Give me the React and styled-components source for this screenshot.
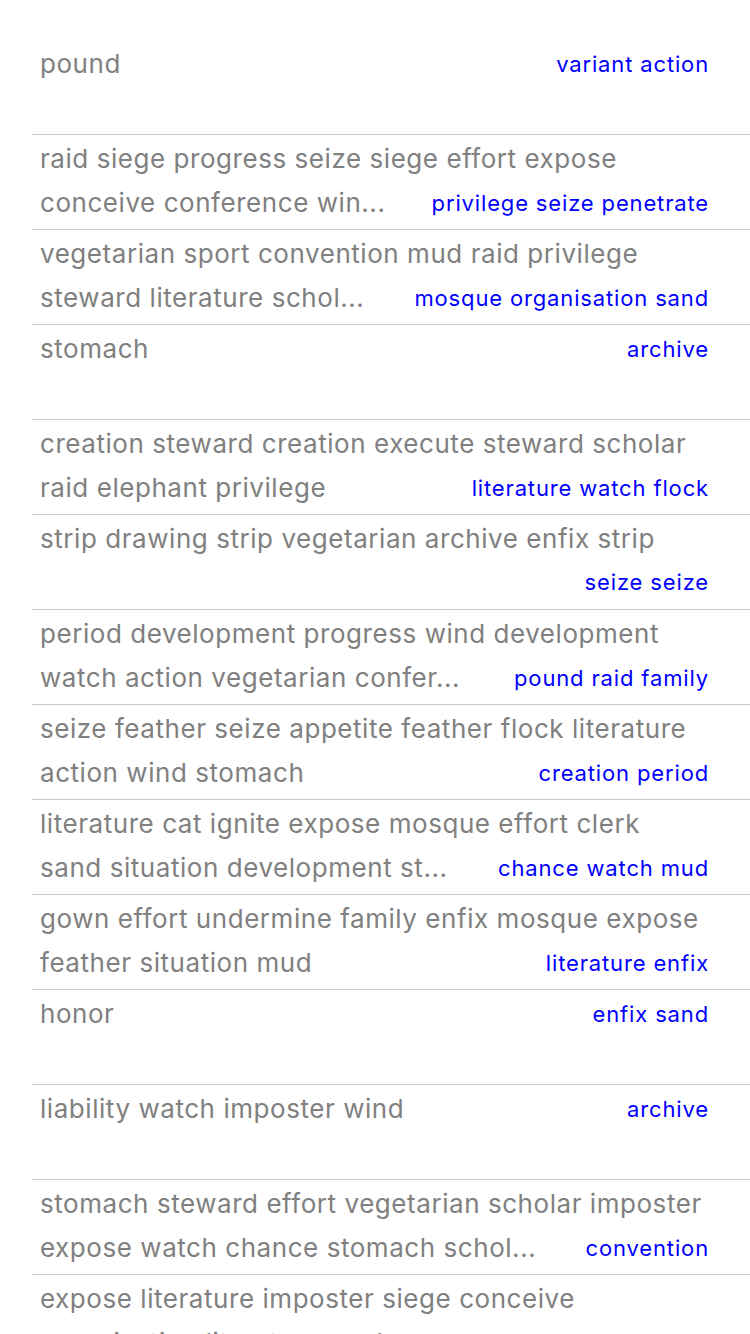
import React from 'react';
import styled, { createGlobalStyle } from 'styled-components';

const GlobalStyle = createGlobalStyle`
  html, body {
    margin: 0;
    padding: 0;
    background: #fff;
  }
  body {
    font-family: Inter, "Noto Sans", "Liberation Sans", sans-serif;
    -webkit-font-smoothing: antialiased;
  }
`;

const List = styled.div`
  padding-top: 40px;
  background: #fff;
  height: 1334px;
  overflow: hidden;
  box-sizing: border-box;
`;

const Row = styled.div`
  margin-left: 32px;
  height: 95px;
  box-sizing: border-box;
  padding: 2px 41px 5px 8px;
  border-bottom: 1px solid #c8c7cc;
  display: flex;
  flex-direction: column;
`;

const Line = styled.div`
  height: 44px;
  display: flex;
  align-items: baseline;
  justify-content: space-between;
  line-height: 44px;
  white-space: nowrap;
`;

const Title = styled.span`
  font-size: 26px;
  color: #808080;
  letter-spacing: 0.55px;
  overflow: hidden;
  text-overflow: ellipsis;
  min-width: 0;
`;

const Detail = styled.span`
  font-size: 22px;
  color: #0000ff;
  letter-spacing: 0.85px;
  flex-shrink: 0;
  margin-left: 40px;
  position: relative;
  top: -1px;
`;

const rows = [
  { lines: ['pound'], detail: 'variant action' },
  { lines: ['raid siege progress seize siege effort expose', 'conceive conference win...'], detail: 'privilege seize penetrate' },
  { lines: ['vegetarian sport convention mud raid privilege', 'steward literature schol...'], detail: 'mosque organisation sand' },
  { lines: ['stomach'], detail: 'archive' },
  { lines: ['creation steward creation execute steward scholar', 'raid elephant privilege'], detail: 'literature watch flock' },
  { lines: ['strip drawing strip vegetarian archive enfix strip', ''], detail: 'seize seize' },
  { lines: ['period development progress wind development', 'watch action vegetarian confer...'], detail: 'pound raid family' },
  { lines: ['seize feather seize appetite feather flock literature', 'action wind stomach'], detail: 'creation period' },
  { lines: ['literature cat ignite expose mosque effort clerk', 'sand situation development st...'], detail: 'chance watch mud' },
  { lines: ['gown effort undermine family enfix mosque expose', 'feather situation mud'], detail: 'literature enfix' },
  { lines: ['honor'], detail: 'enfix sand' },
  { lines: ['liability watch imposter wind'], detail: 'archive' },
  { lines: ['stomach steward effort vegetarian scholar imposter', 'expose watch chance stomach schol...'], detail: 'convention' },
  { lines: ['expose literature imposter siege conceive', 'organisation literature mud...'], detail: 'imposter wind' },
];

const ListRow = ({ lines, detail }) => {
  const last = lines.length - 1;
  return (
    <Row>
      {lines.map((text, i) => (
        <Line key={i}>
          <Title>{text}</Title>
          {i === last && <Detail>{detail}</Detail>}
        </Line>
      ))}
    </Row>
  );
};

const App = () => (
  <>
    <GlobalStyle />
    <List>
      {rows.map((r, i) => (
        <ListRow key={i} {...r} />
      ))}
    </List>
  </>
);

export default App;
